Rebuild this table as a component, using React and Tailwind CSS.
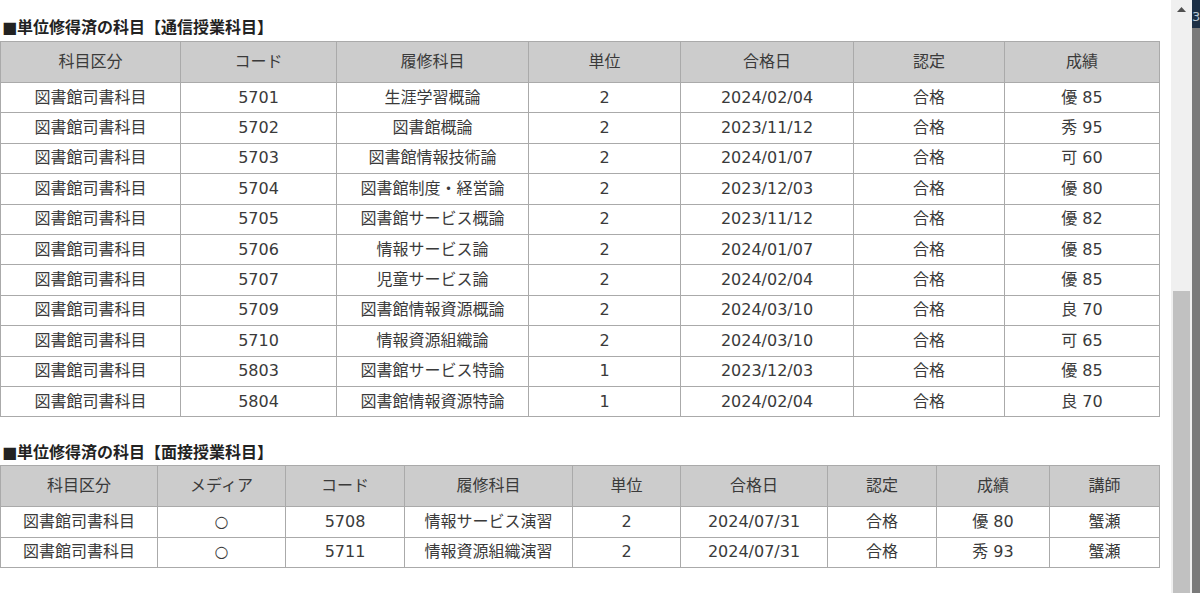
import React from "react";

const tsushin = [
  ["図書館司書科目", "5701", "生涯学習概論", "2", "2024/02/04", "合格", "優 85"],
  ["図書館司書科目", "5702", "図書館概論", "2", "2023/11/12", "合格", "秀 95"],
  ["図書館司書科目", "5703", "図書館情報技術論", "2", "2024/01/07", "合格", "可 60"],
  ["図書館司書科目", "5704", "図書館制度・経営論", "2", "2023/12/03", "合格", "優 80"],
  ["図書館司書科目", "5705", "図書館サービス概論", "2", "2023/11/12", "合格", "優 82"],
  ["図書館司書科目", "5706", "情報サービス論", "2", "2024/01/07", "合格", "優 85"],
  ["図書館司書科目", "5707", "児童サービス論", "2", "2024/02/04", "合格", "優 85"],
  ["図書館司書科目", "5709", "図書館情報資源概論", "2", "2024/03/10", "合格", "良 70"],
  ["図書館司書科目", "5710", "情報資源組織論", "2", "2024/03/10", "合格", "可 65"],
  ["図書館司書科目", "5803", "図書館サービス特論", "1", "2023/12/03", "合格", "優 85"],
  ["図書館司書科目", "5804", "図書館情報資源特論", "1", "2024/02/04", "合格", "良 70"],
];

const mensetsu = [
  ["図書館司書科目", "○", "5708", "情報サービス演習", "2", "2024/07/31", "合格", "優 80", "蟹瀬"],
  ["図書館司書科目", "○", "5711", "情報資源組織演習", "2", "2024/07/31", "合格", "秀 93", "蟹瀬"],
];

const Table = ({ heads, widths, rows }) => {
  return (
    <table className="w-[1159px] table-fixed border-collapse text-[16px] text-[#3a3a3a]">
      <colgroup>
        {widths.map((w, i) => (
          <col key={i} style={{ width: w }} />
        ))}
      </colgroup>
      <thead>
        <tr className="h-[41px] bg-[#cccccc]">
          {heads.map((h, i) => (
            <th key={i} className="border border-[#aaaaaa] p-0 text-center font-normal">
              {h}
            </th>
          ))}
        </tr>
      </thead>
      <tbody>
        {rows.map((r, i) => (
          <tr key={i} className="h-[30.4px]">
            {r.map((c, j) => (
              <td key={j} className="border border-[#aaaaaa] p-0 text-center leading-[20px]">
                {c}
              </td>
            ))}
          </tr>
        ))}
      </tbody>
    </table>
  );
};

export default function App() {
  return (
    <div className="flex h-[593px] w-[1200px] overflow-hidden bg-white font-['DejaVu_Sans','Noto_Sans_CJK_JP',sans-serif]">
      <div className="flex-1">
        {/* 通信授業 */}
        <h2 className="mt-[18px] mb-[3px] pl-[2px] text-[16px] leading-[20px] font-bold text-[#222]">
          ■単位修得済の科目【通信授業科目】
        </h2>
        <Table
          heads={["科目区分", "コード", "履修科目", "単位", "合格日", "認定", "成績"]}
          widths={[180, 156, 192, 152, 173, 151, 155]}
          rows={tsushin}
        />

        {/* 面接授業 */}
        <h2 className="mt-[26px] mb-[2px] pl-[2px] text-[16px] leading-[20px] font-bold text-[#222]">
          ■単位修得済の科目【面接授業科目】
        </h2>
        <Table
          heads={["科目区分", "メディア", "コード", "履修科目", "単位", "合格日", "認定", "成績", "講師"]}
          widths={[157, 128, 119, 168, 108, 147, 109, 113, 110]}
          rows={mensetsu}
        />
      </div>

      {/* scrollbar */}
      <div className="flex w-[21px] flex-col bg-[#f0f0f0]">
        <div className="flex h-[18px] items-center justify-center">
          <svg width="9" height="5" viewBox="0 0 9 5">
            <path d="M0 5 L4.5 0 L9 5 Z" fill="#505050" />
          </svg>
        </div>
        <div className="h-[273px]" />
        <div className="mx-[2px] flex-1 bg-[#c1c1c1]" />
      </div>
      <div className="flex w-[8px] flex-col bg-[#7a7a7a]">
        <div className="h-[28px] overflow-hidden bg-[#1c2f45] pt-[10px] text-[13px] leading-[14px] text-[#b8c4d0]">3</div>
      </div>
    </div>
  );
}
